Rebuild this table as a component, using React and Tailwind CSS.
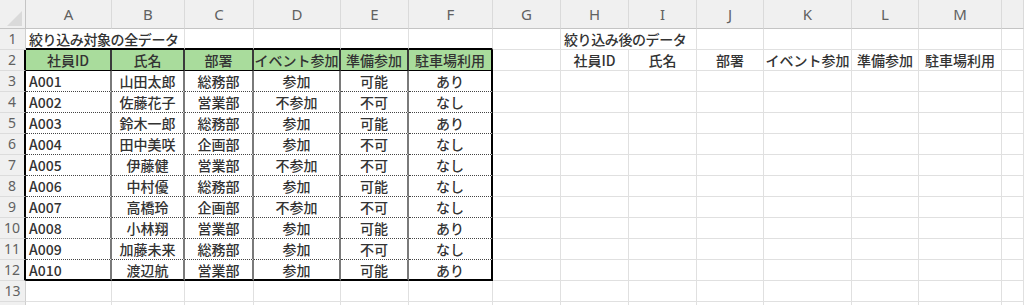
import clsx from 'clsx'

const LETTERS = ['A', 'B', 'C', 'D', 'E', 'F', 'G', 'H', 'I', 'J', 'K', 'L', 'M', '']

const HEADERS = ['社員ID', '氏名', '部署', 'イベント参加', '準備参加', '駐車場利用']

const EMPLOYEES = [
  ['A001', '山田太郎', '総務部', '参加', '可能', 'あり'],
  ['A002', '佐藤花子', '営業部', '不参加', '不可', 'なし'],
  ['A003', '鈴木一郎', '総務部', '参加', '可能', 'あり'],
  ['A004', '田中美咲', '企画部', '参加', '不可', 'なし'],
  ['A005', '伊藤健', '営業部', '不参加', '不可', 'なし'],
  ['A006', '中村優', '総務部', '参加', '可能', 'なし'],
  ['A007', '高橋玲', '企画部', '不参加', '不可', 'なし'],
  ['A008', '小林翔', '営業部', '参加', '可能', 'あり'],
  ['A009', '加藤未来', '総務部', '参加', '不可', 'なし'],
  ['A010', '渡辺航', '営業部', '参加', '可能', 'あり'],
]

const plain = 'border-r border-b border-[#e0e0e0] bg-white'

function RowHead({ n, boxed }) {
  return (
    <div
      className={clsx(
        "flex items-center justify-center border-b border-b-[#dcdcdc] bg-[#f0f0f0] font-['Noto_Sans',sans-serif] text-[14px] font-normal text-[#616161]",
        boxed ? 'border-r-2 border-r-black' : 'border-r border-r-[#cfcfcf]'
      )}
    >
      {n}
    </div>
  )
}

function Blank({ count }) {
  return Array.from({ length: count }, (_, i) => <div key={i} className={plain} />)
}

function ColumnHeader() {
  return (
    <>
      <div className="flex items-end justify-end border-r border-b border-[#c4c4c4] bg-[#f0f0f0] pr-[3px] pb-[2px]">
        <svg width="15" height="15" viewBox="0 0 15 15">
          <polygon points="15,0 15,15 0,15" fill="#dadada" />
        </svg>
      </div>
      {LETTERS.map((letter, i) => (
        <div
          key={i}
          className="flex items-center justify-center border-r border-r-[#dadada] border-b border-b-[#c4c4c4] bg-[#f0f0f0] font-['Noto_Sans',sans-serif] text-[15px] font-normal text-[#616161]"
        >
          {letter}
        </div>
      ))}
    </>
  )
}

function TitleRow() {
  return (
    <>
      <RowHead n={1} />
      <div className="col-span-2 flex items-center whitespace-nowrap border-r border-r-[#e0e0e0] border-b-2 border-b-black bg-white pl-[3px] tracking-[-0.4px]">
        絞り込み対象の全データ
      </div>
      {[0, 1, 2, 3].map((i) => (
        <div key={i} className="border-r border-r-[#e0e0e0] border-b-2 border-b-black bg-white" />
      ))}
      <div className={plain} />
      <div className="col-span-2 flex items-center whitespace-nowrap border-r border-b border-[#e0e0e0] bg-white pl-[3px] tracking-[-0.4px]">
        絞り込み後のデータ
      </div>
      <Blank count={5} />
    </>
  )
}

function HeaderRow() {
  return (
    <>
      <RowHead n={2} boxed />
      {HEADERS.map((label, i) => (
        <div
          key={label}
          className={clsx(
            'flex items-center justify-center whitespace-nowrap border-b border-b-black bg-[#a9dc9c]',
            i === 5 ? 'border-r-2 border-r-black' : 'border-r-2 border-r-[#3a3a3a]'
          )}
        >
          {label}
        </div>
      ))}
      <div className={plain} />
      {HEADERS.map((label) => (
        <div key={label} className={clsx(plain, 'flex items-center justify-center whitespace-nowrap')}>
          {label}
        </div>
      ))}
      <div className={plain} />
    </>
  )
}

function DataRow({ n, cells, last }) {
  return (
    <>
      <RowHead n={n} boxed />
      {cells.map((value, i) => (
        <div
          key={i}
          className={clsx(
            'flex items-center whitespace-nowrap bg-white',
            i === 0 ? 'justify-start pl-[3px]' : 'justify-center',
            i === 5 ? 'border-r-2 border-r-black' : 'border-r-2 border-r-[#7a7a7a]',
            last ? 'border-b-2 border-b-black' : 'border-b border-b-[#444] [border-bottom-style:dotted]'
          )}
        >
          {value}
        </div>
      ))}
      <Blank count={8} />
    </>
  )
}

export default function App() {
  return (
    <div className="h-[305px] w-[1024px] overflow-hidden bg-white">
      <div className="grid grid-cols-[26px_86px_73px_69px_87px_68px_84px_68px_68px_68px_67px_88px_67px_83px_1fr] grid-rows-[29px_repeat(14,21px)] font-['Noto_Sans_CJK_JP','Noto_Sans',sans-serif] text-[14px] font-medium leading-none text-[#333]">
        <ColumnHeader />
        <TitleRow />
        <HeaderRow />
        {EMPLOYEES.map((row, i) => (
          <DataRow key={row[0]} n={i + 3} cells={row} last={i === EMPLOYEES.length - 1} />
        ))}
        <RowHead n={13} />
        <Blank count={14} />
        <RowHead />
        <Blank count={14} />
      </div>
    </div>
  )
}
